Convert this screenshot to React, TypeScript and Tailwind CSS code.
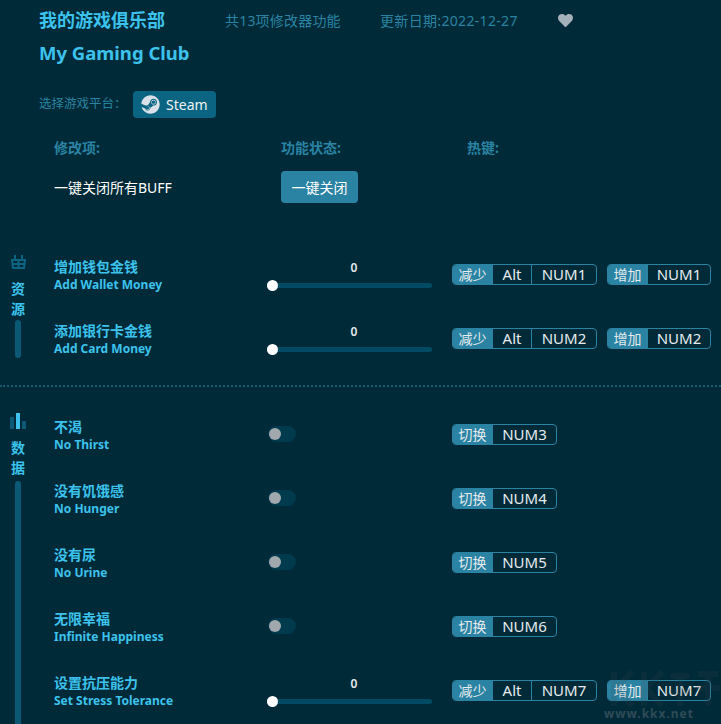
import { FaSteam, FaHeart } from 'react-icons/fa';

const latin = "font-['Noto_Sans','Noto_Sans_CJK_SC',sans-serif]";

function Hotkey({ label, keys, width }: { label: string; keys: string[]; width: string }) {
  return (
    <div className={`flex h-[21px] items-stretch overflow-hidden rounded-[4px] border border-[#2a83a2] text-[15px] leading-[19px] text-[#e4eaee] ${width}`}>
      <span className="flex w-[39px] shrink-0 items-center justify-center bg-[#2a83a2] text-[14px]">{label}</span>
      {keys.map((k) => (
        <span
          key={k}
          className={`flex items-center justify-center border-l border-[#2a83a2] first:border-l-0 ${k === 'Alt' ? 'w-[39px] shrink-0' : 'flex-1'}`}
        >
          {k}
        </span>
      ))}
    </div>
  );
}

function Slider() {
  return (
    <div className="relative h-[32px] w-[165px] shrink-0">
      <div className="pl-[9px] pt-[1px] text-center text-[12px] font-semibold leading-[18px] text-[#e4eaee]">0</div>
      <div className="absolute left-0 right-0 top-[25px] h-[5px] rounded-full bg-[#004b63]" />
      <div className="absolute left-0 top-[22px] h-[11px] w-[11px] rounded-full bg-white" />
    </div>
  );
}

function Toggle() {
  return (
    <div className="mt-[8px] flex h-[32px] w-[165px] shrink-0 items-start pl-[1px]">
      <div className="flex h-[16px] w-[28px] items-center rounded-full bg-[#003a4d]">
        <div className="ml-[1px] h-[12px] w-[12px] rounded-full bg-[#a0a8ad]" />
      </div>
    </div>
  );
}

type Row = { cn: string; en: string; kind: 'slider' | 'toggle'; num: string };

function TrainerRow({ row }: { row: Row }) {
  return (
    <div className="flex h-[64px] items-start">
      <div className="w-[213px] shrink-0">
        <div className="text-[14px] font-semibold leading-[18px] text-[#3cc2ec]">{row.cn}</div>
        <div className="text-[12px] font-bold leading-[18px] text-[#3cc2ec]">{row.en}</div>
      </div>
      {row.kind === 'slider' ? <Slider /> : <Toggle />}
      <div className="ml-[20px] mt-[6px] flex gap-[10px]">
        {row.kind === 'slider' ? (
          <>
            <Hotkey label="减少" keys={['Alt', row.num]} width="w-[145px]" />
            <Hotkey label="增加" keys={[row.num]} width="w-[104px]" />
          </>
        ) : (
          <Hotkey label="切换" keys={[row.num]} width="w-[105px]" />
        )}
      </div>
    </div>
  );
}

function Section({
  title,
  icon,
  rows,
  bar,
}: {
  title: string[];
  icon: React.ReactNode;
  rows: Row[];
  bar: string;
}) {
  return (
    <div className="flex">
      <div className="flex w-[54px] shrink-0 flex-col items-center pr-[18px]">
        {icon}
        <div className="mt-[6px] text-[14px] font-bold leading-[20px] text-[#3cc2ec]">
          {title.map((t) => (
            <div key={t}>{t}</div>
          ))}
        </div>
        <div className={`w-[6px] rounded-full bg-[#0a5a76] ${bar}`} />
      </div>
      <div className="min-w-0 flex-1">
        {rows.map((r) => (
          <TrainerRow key={r.cn} row={r} />
        ))}
      </div>
    </div>
  );
}

const resourceRows: Row[] = [
  { cn: '增加钱包金钱', en: 'Add Wallet Money', kind: 'slider', num: 'NUM1' },
  { cn: '添加银行卡金钱', en: 'Add Card Money', kind: 'slider', num: 'NUM2' },
];

const dataRows: Row[] = [
  { cn: '不渴', en: 'No Thirst', kind: 'toggle', num: 'NUM3' },
  { cn: '没有饥饿感', en: 'No Hunger', kind: 'toggle', num: 'NUM4' },
  { cn: '没有尿', en: 'No Urine', kind: 'toggle', num: 'NUM5' },
  { cn: '无限幸福', en: 'Infinite Happiness', kind: 'toggle', num: 'NUM6' },
  { cn: '设置抗压能力', en: 'Set Stress Tolerance', kind: 'slider', num: 'NUM7' },
];

export default function App() {
  return (
    <div className={`relative h-[724px] w-[721px] overflow-hidden bg-[#002a38] ${latin}`}>
      <div className="pl-[39px] pt-[7px]">
        <div className="flex h-[26px] items-center">
          <h1 className="w-[186px] text-[18px] font-bold text-[#3cc2ec]">我的游戏俱乐部</h1>
          <span className="w-[155px] text-[14px] tracking-[0.2px] text-[#2a83a2]">共13项修改器功能</span>
          <span className="w-[178px] text-[14px] tracking-[0.33px] text-[#2a83a2]">更新日期:2022-12-27</span>
          <FaHeart className="text-[15px] text-[#a4b1ba]" />
        </div>
        <h2 className="mt-[7px] text-[18.5px] font-bold leading-[26px] text-[#3cc2ec]">My Gaming Club</h2>
        <div className="mt-[25px] flex items-center">
          <span className="w-[94px] text-[12.5px] text-[#2a83a2]">选择游戏平台：</span>
          <div className="flex h-[27px] w-[83px] items-center gap-[6px] rounded-[4px] bg-[#0a6482] pl-[8px] text-[14px] text-[#eef2f5]">
            <FaSteam className="text-[19px] text-[#d9e0e8]" />
            Steam
          </div>
        </div>
      </div>

      <div className="mt-[21px] flex pl-[54px] text-[14px] font-bold leading-[18px] text-[#2a83a2]">
        <span className="w-[227px]">修改项:</span>
        <span className="w-[186px]">功能状态:</span>
        <span>热键:</span>
      </div>
      <div className="mt-[14px] flex items-center pl-[54px]">
        <span className="w-[227px] text-[14px] text-white">一键关闭所有BUFF</span>
        <button className="h-[32px] w-[77px] rounded-[4px] bg-[#2a83a2] text-[14px] text-white">一键关闭</button>
      </div>

      <div className="mt-[55px]">
        <Section
          title={['资', '源']}
          rows={resourceRows}
          bar="mt-[1px] h-[38px]"
          icon={
            <svg width="17" height="15" viewBox="0 0 17 15" fill="none" stroke="#0a6482" strokeWidth="2" className="-mt-[4px] mb-[4px]">
              <path d="M1 6h15M2 6l1 8h11l1-8M5 6V1M12 6V1M8.5 6v8M3 10h11" />
            </svg>
          }
        />
      </div>
      <div className="-mt-[1px] h-[2px] border-t-2 border-dotted border-[#145a72]" />
      <div className="mt-[31px]">
        <Section
          title={['数', '据']}
          rows={dataRows}
          bar="mt-[3px] h-[260px]"
          icon={
            <svg width="16" height="16" viewBox="0 0 16 16" className="-mt-[5px] mb-[3px]">
              <rect x="0" y="4" width="4" height="12" fill="#0a5a76" />
              <rect x="6" y="0" width="4" height="16" fill="#3cc2ec" />
              <rect x="12" y="8" width="4" height="8" fill="#0a5a76" />
            </svg>
          }
        />
      </div>

      {/* faint site logo over the corner */}
      <svg
        width="113"
        height="42"
        viewBox="0 0 113 42"
        fill="none"
        stroke="#3f4448"
        strokeOpacity="0.16"
        strokeWidth="6"
        className="pointer-events-none absolute left-[608px] top-[668px]"
      >
        <path d="M6 4v34M24 4 8 20l16 18M36 4v34M54 4 38 20l16 18" />
        <path d="M62 8h20M72 8v30M62 24h20M90 6h20M100 6v12M88 20h24M100 20v18" />
      </svg>
      <div className="pointer-events-none absolute bottom-[1px] right-[27px] text-[12px] font-bold tracking-[1px] text-[#2f4b57]">
        www.kkx.net
      </div>
    </div>
  );
}
